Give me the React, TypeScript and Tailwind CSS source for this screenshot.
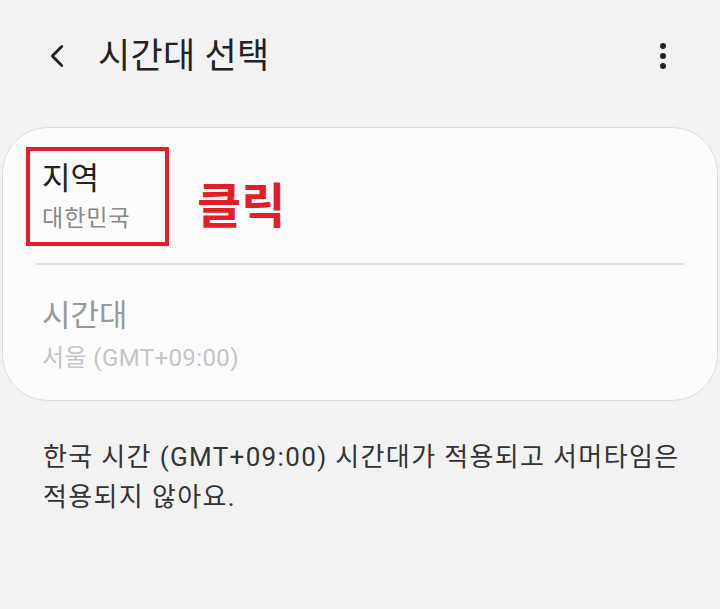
import { ChevronLeft } from "lucide-react";

export default function App() {
  return (
    <main
      className="w-[720px] h-[609px] bg-[#f2f2f2] overflow-hidden"
      style={{ fontFamily: 'Roboto, "Noto Sans CJK KR", sans-serif' }}
    >
      {/* header */}
      <div className="flex items-center h-[112px] pl-[38px] pr-[54px]">
        <ChevronLeft className="w-[38px] h-[38px] text-[#222]" strokeWidth={1.8} />
        <h1 className="ml-[22px] text-[35px] text-[#222] tracking-[0.3px] leading-none">시간대 선택</h1>
        <div className="ml-auto flex flex-col gap-[4px] items-center">
          <span className="w-[6px] h-[6px] rounded-full bg-[#222]" />
          <span className="w-[6px] h-[6px] rounded-full bg-[#222]" />
          <span className="w-[6px] h-[6px] rounded-full bg-[#222]" />
        </div>
      </div>

      {/* card */}
      <div className="mx-[2px] mt-[15px] h-[274px] rounded-[46px] bg-[#fcfcfc] border border-[#dcdcdc] px-[33px] pt-[19px]">
        <div className="flex items-center">
          <div className="border-4 border-[#e41e26] w-[143px] h-[99px] -ml-[10px] pl-[12px] pt-[9px]">
            <div className="text-[31px] text-[#222] leading-[38px]">지역</div>
            <div className="text-[23px] text-[#888] leading-[30px] mt-[6px] tracking-[1px]">대한민국</div>
          </div>
          <div className="ml-[28px] mt-[20px] text-[48px] font-bold text-[#e41e26] leading-none">클릭</div>
        </div>
        <div className="mt-[17px] h-[2px] bg-[#e2e2e2]" />
        <div className="pt-[32px] pl-[6px]">
          <div className="text-[31px] text-[#9a9a9a] leading-[38px]">시간대</div>
          <div className="text-[24px] text-[#c4c4c4] leading-[30px] mt-[8px] tracking-[0.4px]">서울 (GMT+09:00)</div>
        </div>
      </div>

      {/* description */}
      <p className="mt-[36px] pl-[43px] pr-[20px] text-[26px] text-[#333] leading-[40px] tracking-[1.35px] break-keep">
        한국 시간 (GMT+09:00) 시간대가 적용되고 서머타임은 적용되지 않아요.
      </p>
    </main>
  );
}
